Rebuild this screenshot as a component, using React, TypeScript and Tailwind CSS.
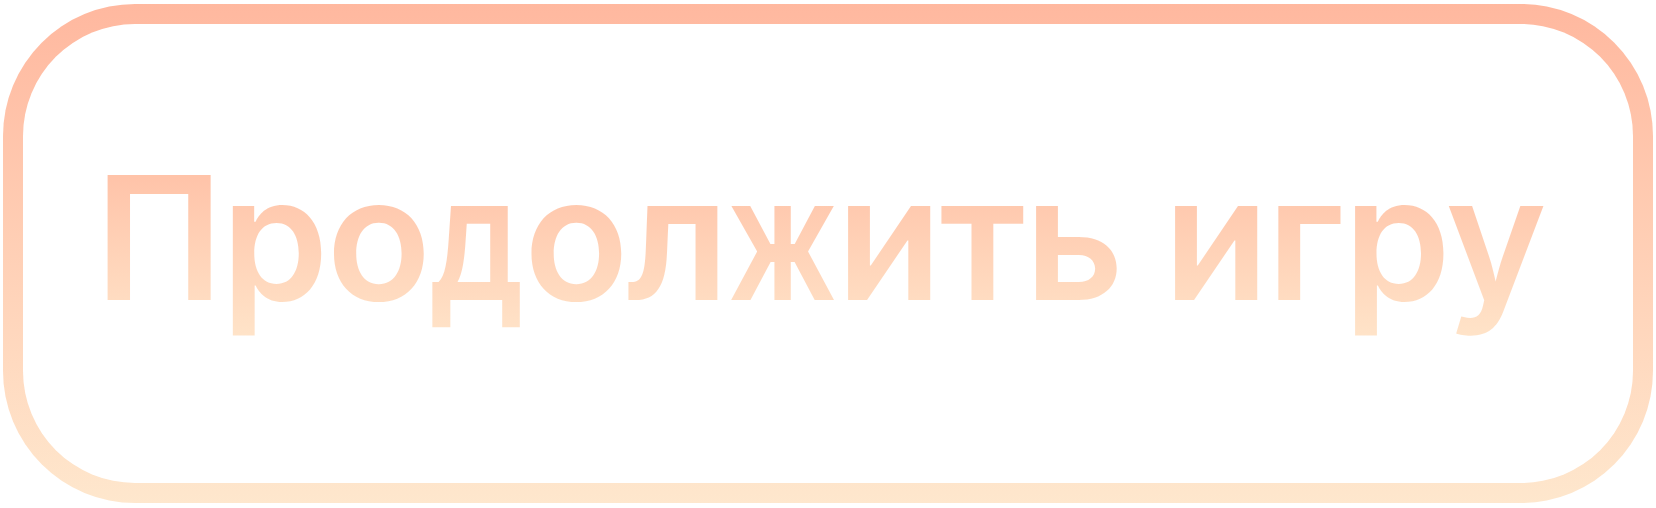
import React from "react";

const grad =
  "bg-linear-to-b from-[#ffb99f] to-[#ffe6cb] bg-clip-text text-transparent";

export default function App() {
  return (
    <div className="w-[1656px] h-[508px] bg-white pt-[4px] pl-[3px]">
      <div className="w-[1650px] h-[499px] rounded-[132px] bg-linear-to-b from-[#ffb89f] to-[#fee7cd] p-[20px]">
        <div className="w-full h-full rounded-[112px] bg-white flex items-center pl-[72px] pb-[32px]">
          <span
            className={`inline-block text-[172px] leading-[1.3] font-semibold tracking-[-2px] whitespace-nowrap ${grad}`}
            style={{ fontFamily: "Inter, 'Noto Sans', sans-serif" }}
          >
            Про
            <span className={`inline-block -mx-[8px] scale-x-[0.84] ${grad}`}>д</span>
            ол
            <span className={`inline-block -mx-[17px] scale-x-[0.75] ${grad}`}>ж</span>
            ить игру
          </span>
        </div>
      </div>
    </div>
  );
}
